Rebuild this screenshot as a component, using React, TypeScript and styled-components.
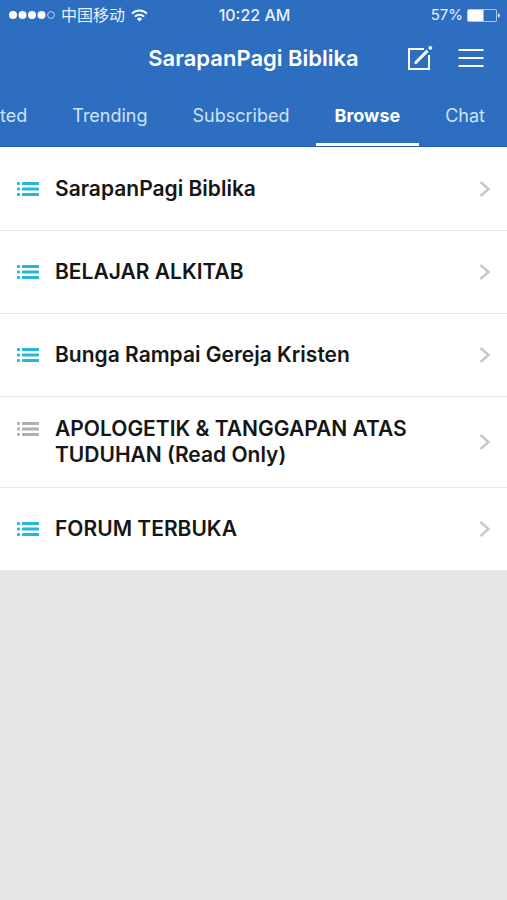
import React from 'react';
import styled, { createGlobalStyle } from 'styled-components';

const GlobalStyle = createGlobalStyle`
  *, *::before, *::after { box-sizing: border-box; }
  html, body, #root { min-height: 100vh; }
  body {
    margin: 0;
    background: #e7e7e7;
    font-family: Inter, "Noto Sans CJK SC", sans-serif;
  }
  button { font: inherit; color: inherit; background: none; border: 0; padding: 0; cursor: pointer; }
`;

const Header = styled.header`
  display: flex;
  flex-direction: column;
  background: #2d6ec0;
  color: #fff;
  border-bottom: 1px solid #2660a8;
`;

const StatusBar = styled.div`
  display: grid;
  grid-template-columns: 1fr auto 1fr;
  align-items: center;
  height: 30px;
  padding: 0 7px 0 9px;
  font-size: 16px;
  line-height: 20px;
  color: #e8f1fc;
`;

const StatusGroup = styled.div<{ $end?: boolean }>`
  display: flex;
  align-items: center;
  gap: ${({ $end }) => ($end ? 4 : 6)}px;
  justify-content: ${({ $end }) => ($end ? 'flex-end' : 'flex-start')};
`;

const Charge = styled.span`
  font-size: 15px;
`;

const Clock = styled.time`
  font-weight: 500;
`;

const TitleBar = styled.div`
  display: grid;
  grid-template-columns: 1fr auto 1fr;
  align-items: center;
  height: 56px;
  padding: 0 23px;
`;

const Title = styled.h1`
  grid-column: 2;
  margin: 0;
  font-size: 22px;
  line-height: 28px;
  font-weight: 600;
`;

const Actions = styled.div`
  display: flex;
  justify-content: flex-end;
  align-items: center;
  gap: 25px;
`;

const IconButton = styled.button`
  display: flex;
`;

const Tabs = styled.nav`
  display: flex;
  justify-content: flex-end;
  gap: 7px;
  height: 60px;
  padding-right: 3px;
  overflow: hidden;
`;

const Tab = styled.button<{ $active?: boolean }>`
  && {
    flex: none;
    padding: 2px 19px 0;
    font-size: 18px;
    line-height: 24px;
    font-weight: ${({ $active }) => ($active ? 700 : 400)};
    color: ${({ $active }) => ($active ? '#fff' : '#cfe2f8')};
    border-bottom: 3px solid ${({ $active }) => ($active ? '#fff' : 'transparent')};
  }
`;

const ForumList = styled.ul`
  margin: 0;
  padding: 0;
  list-style: none;
  background: #fff;
`;

const ForumButton = styled.button`
  && {
    display: flex;
    align-items: center;
    width: 100%;
    min-height: 83px;
    padding: 19px 16px;
    text-align: left;
    color: #161616;
  }
`;

const ForumItem = styled.li`
  & + & ${ForumButton} { border-top: 1px solid #e9e9e9; }
`;

const ForumIcon = styled.span<{ $muted?: boolean }>`
  display: flex;
  align-items: center;
  align-self: flex-start;
  height: 26px;
  color: ${({ $muted }) => ($muted ? '#b0b0b0' : '#24b8dc')};
`;

const ForumBody = styled.span`
  flex: 1;
  display: flex;
  gap: 15px;
`;

const ForumName = styled.span`
  flex: 1;
  max-width: 380px;
  font-size: 21px;
  line-height: 26px;
  font-weight: 600;
`;

const SignalIcon = () => (
  <svg width="46" height="10" viewBox="0 0 46 10" aria-label="Signal strength">
    {[4, 13.5, 23, 32.5].map((x) => (
      <circle key={x} cx={x} cy="5" r="4" fill="#fff" />
    ))}
    <circle cx="42" cy="5" r="3.4" fill="none" stroke="#b9d3f2" strokeWidth="1" />
  </svg>
);

const WifiIcon = () => (
  <svg width="17" height="13" viewBox="0 0 17 13" fill="none" stroke="#f4f9ff" aria-label="Wi-Fi">
    <path d="M1 4.6a10.6 10.6 0 0 1 15 0" strokeWidth="2" />
    <path d="M3.9 7.6a6.5 6.5 0 0 1 9.2 0" strokeWidth="2" />
    <path d="M8.5 12.6 5.9 9.9a3.7 3.7 0 0 1 5.2 0z" fill="#f4f9ff" stroke="none" />
  </svg>
);

const BatteryIcon = () => (
  <svg width="33" height="13" viewBox="0 0 33 13" aria-label="Battery">
    <rect x="0.5" y="0.5" width="29" height="12" rx="1" fill="none" stroke="#a9caef" />
    <rect x="1" y="1" width="15.5" height="11" fill="#fff" />
    <path d="M31 4.5c1.3.3 1.8 1.1 1.8 2s-.5 1.7-1.8 2z" fill="#e8f1fc" />
  </svg>
);

const ComposeIcon = () => (
  <svg width="26" height="26" viewBox="0 0 26 26" fill="none" stroke="#fff" strokeWidth="2">
    <path d="M17 4H2v20h20V10" />
    <path d="M9.500 16.800 20.600 5.600" strokeWidth="3" />
    <circle cx="23.400" cy="2.800" r="1.900" fill="#fff" stroke="none" />
    <path d="m7.300 19.200.9-3.700 2.800 2.800z" fill="#fff" stroke="none" />
  </svg>
);

const MenuIcon = () => (
  <svg width="26" height="20" viewBox="0 0 26 20" stroke="#fff" strokeWidth="2">
    <path d="M.5 2h25M.5 10h25M.5 18h25" />
  </svg>
);

const ListIcon = () => (
  <svg width="24" height="16" viewBox="0 0 24 16" fill="currentColor" aria-hidden="true">
    {[1, 6.5, 12].map((y) => (
      <g key={y}>
        <rect x="1" y={y} width="3" height="3" rx="1" />
        <rect x="6" y={y} width="17" height="3" rx="0.5" />
      </g>
    ))}
  </svg>
);

const ChevronIcon = () => (
  <svg width="12" height="18" viewBox="0 0 12 18" fill="none" stroke="#c7c7cc" strokeWidth="2.4" aria-hidden="true">
    <path d="m1.5 2 8 7-8 7" />
  </svg>
);

const tabs = ['Participated', 'Trending', 'Subscribed', 'Browse', 'Chat'];

const forums = [
  { name: 'SarapanPagi Biblika' },
  { name: 'BELAJAR ALKITAB' },
  { name: 'Bunga Rampai Gereja Kristen' },
  { name: 'APOLOGETIK & TANGGAPAN ATAS TUDUHAN (Read Only)', readOnly: true },
  { name: 'FORUM TERBUKA' },
];

export default function App() {
  return (
    <>
      <GlobalStyle />
      <Header>
        <StatusBar>
          <StatusGroup>
            <SignalIcon />
            <span>中国移动</span>
            <WifiIcon />
          </StatusGroup>
          <Clock>10:22 AM</Clock>
          <StatusGroup $end>
            <Charge>57%</Charge>
            <BatteryIcon />
          </StatusGroup>
        </StatusBar>
        <TitleBar>
          <Title>SarapanPagi Biblika</Title>
          <Actions>
            <IconButton aria-label="New topic"><ComposeIcon /></IconButton>
            <IconButton aria-label="Menu"><MenuIcon /></IconButton>
          </Actions>
        </TitleBar>
        <Tabs>
          {tabs.map((tab) => (
            <Tab key={tab} $active={tab === 'Browse'} aria-current={tab === 'Browse' ? 'page' : undefined}>
              {tab}
            </Tab>
          ))}
        </Tabs>
      </Header>
      <main>
        <ForumList>
          {forums.map(({ name, readOnly }) => (
            <ForumItem key={name}>
              <ForumButton>
                <ForumBody>
                  <ForumIcon $muted={readOnly}><ListIcon /></ForumIcon>
                  <ForumName>{name}</ForumName>
                </ForumBody>
                <ChevronIcon />
              </ForumButton>
            </ForumItem>
          ))}
        </ForumList>
      </main>
    </>
  );
}
